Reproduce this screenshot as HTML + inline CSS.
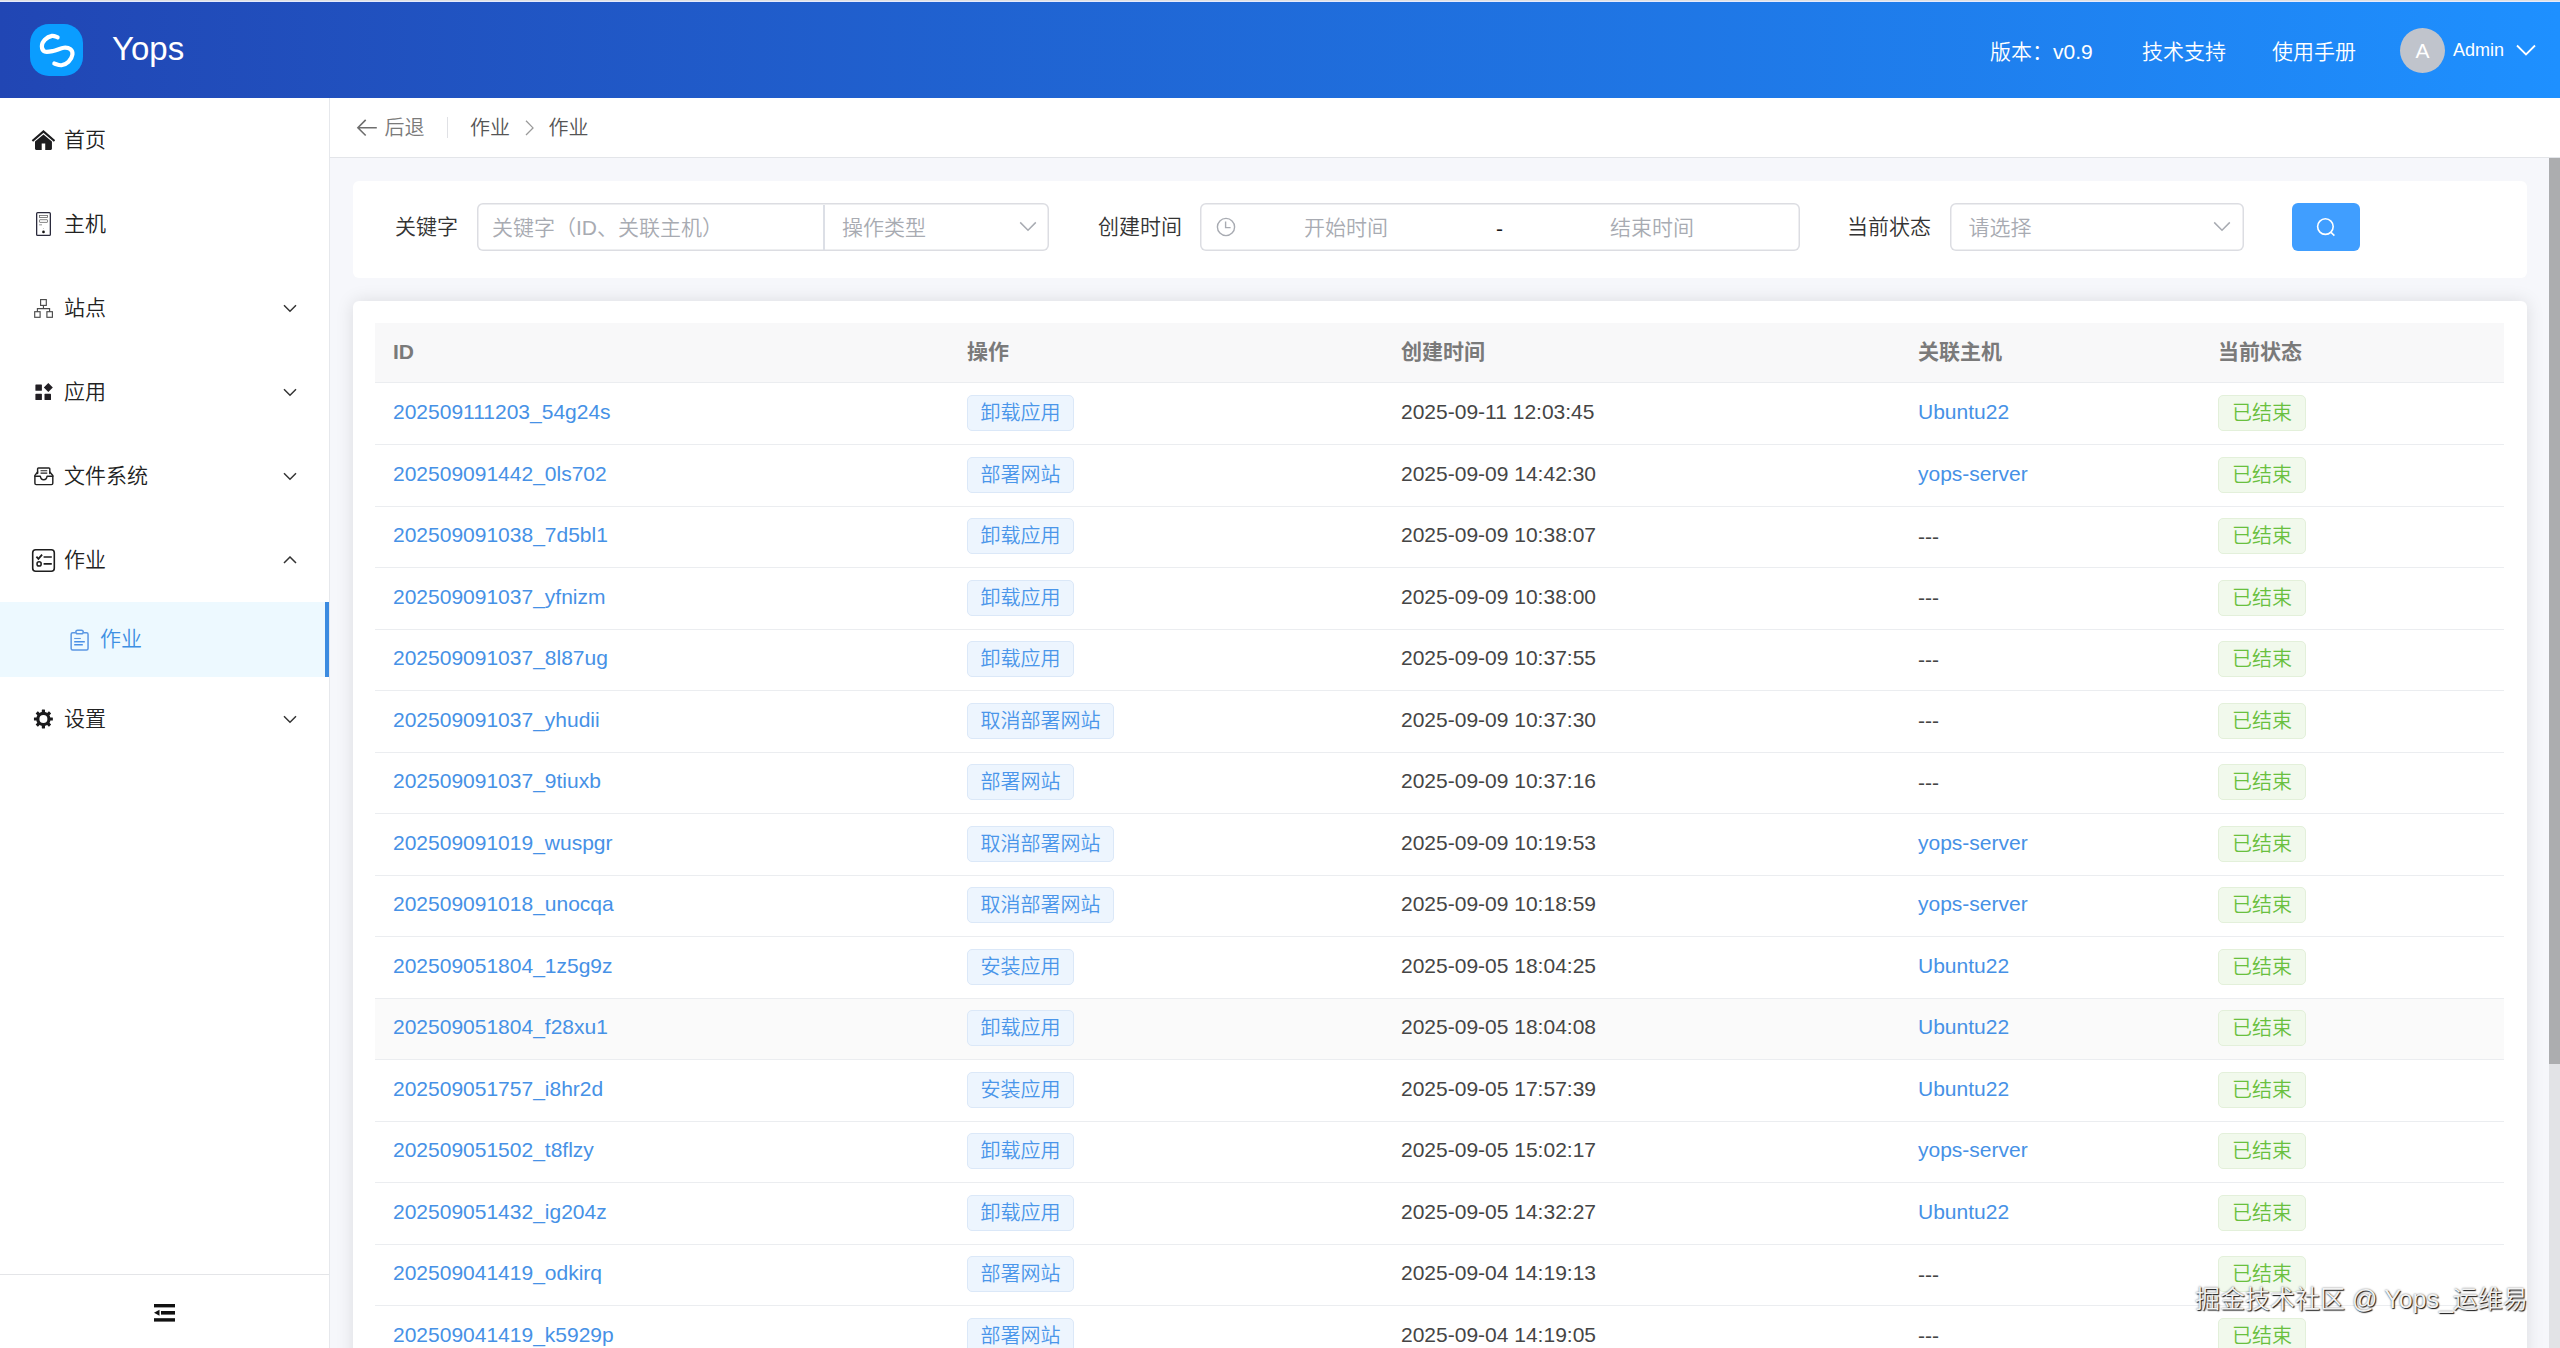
<!DOCTYPE html>
<html lang="zh-CN">
<head>
<meta charset="utf-8">
<title>Yops - 作业</title>
<style>
*{box-sizing:border-box;margin:0;padding:0}
html,body{width:2560px;height:1348px;overflow:hidden}
body{position:relative;background:#f6f7fb;font-family:"Liberation Sans","Noto Sans CJK SC",sans-serif;font-size:21px;font-weight:350;color:#303133}
svg{display:block}
.abs{position:absolute}
/* top strip + header */
#strip{position:absolute;left:0;top:0;width:2560px;height:2px;background:linear-gradient(#e0e0e0 0,#e0e0e0 50%,#e6ebff 50%,#e6ebff 100%)}
#header{position:absolute;left:0;top:2px;width:2560px;height:96px;background:linear-gradient(90deg,#2146b4 0%,#1e90ff 100%);color:#fff}
#logo{position:absolute;left:30px;top:22px;width:53px;height:52px;border-radius:19px;background:#0a9dff}
#brand{position:absolute;left:112px;top:26.5px;font-size:33px;line-height:40px;color:#fff;white-space:nowrap}
.hlink{position:absolute;top:35px;height:30px;line-height:30px;font-size:21px;color:#fff;white-space:nowrap}
#avatar{position:absolute;left:2400px;top:26px;width:45px;height:45px;border-radius:50%;background:#c0c4cc;color:#fff;font-size:21px;line-height:45px;text-align:center}
#admin{position:absolute;left:2453px;top:33px;font-size:18px;line-height:30px;color:#fff}
/* sidebar */
#side{position:absolute;left:0;top:98px;width:330px;height:1250px;background:#fff;border-right:1px solid #e6e8ec}
.mi{position:absolute;left:0;width:329px;height:84px}
.mi .ic{position:absolute}
.mi .tx{position:absolute;left:64px;top:27px;font-size:21px;line-height:30px;color:#222;white-space:nowrap}
.mi .chev{position:absolute;left:283px;top:38px}
#active{position:absolute;left:0;top:504px;width:329px;height:75px;background:#edf9ff}
#active .bar{position:absolute;right:0;top:0;width:4px;height:75px;background:#3b8be0}
#active .tx{position:absolute;left:100px;top:22px;font-size:21px;line-height:30px;color:#3d8fe3}
#sidefoot{position:absolute;left:0;top:1176px;width:329px;height:74px;border-top:1px solid #e4e5e8}
/* breadcrumb */
#crumb{position:absolute;left:330px;top:98px;width:2230px;height:60px;background:#fff;border-bottom:1px solid #e3e5e9}
#crumb span{position:absolute;top:14.5px;font-size:20px;line-height:30px;white-space:nowrap}
/* cards */
.card{position:absolute;background:#fff;border-radius:6px}
#filter{left:353px;top:181px;width:2174px;height:97px}
#tcard{left:353px;top:301px;width:2174px;height:1100px;box-shadow:0 0 18px rgba(0,0,10,.115)}
.lbl{position:absolute;top:31px;font-size:21px;line-height:30px;color:#333;white-space:nowrap}
.inp{position:absolute;top:22px;height:48px;box-shadow:0 0 0 1.5px #dcdde2 inset;border-radius:6px;background:#fff}
.ph{position:absolute;top:10px;font-size:21px;line-height:30px;color:#a8abb2;white-space:nowrap}
#sbtn{position:absolute;left:1939px;top:22px;width:68px;height:48px;border-radius:6px;background:#409eff}
/* table */
#thead{position:absolute;left:22px;top:22px;width:2129px;height:60px;background:#f8f8f9;border-bottom:1px solid #ebedf0}
#thead span{position:absolute;top:14px;font-size:21px;line-height:30px;font-weight:bold;color:#7a7a7a;white-space:nowrap}
.row{position:absolute;left:22px;width:2129px;height:61.5px;border-bottom:1px solid #ebedf0}
.row.hov{background:#fafafa}
.row span{position:absolute;white-space:nowrap}
.c1{left:18px;top:13.5px;font-size:21px;line-height:30px;color:#4691e6}
.c3{left:1026px;top:13.5px;font-size:21px;line-height:30px;color:#454545}
.c4{left:1543px;top:13.5px;font-size:21px;line-height:30px;color:#4691e6}
.c4.no{color:#454545;top:15px}
.tag{top:11.5px;height:36px;padding:0 12.5px;border-radius:5px;font-size:20px;line-height:34px;border:1px solid #dbe8f8;background:#edf5fe;color:#4a96ea}
.c2{left:592px}
.c5{left:1843px}
.tag.ok{border-color:#e3f0da;background:#f1f9ec;color:#69c03e;padding:0 13px}
/* scrollbar */
#sbtrack{position:absolute;left:2549px;top:158px;width:11px;height:1190px;background:#e2e3e6}
#sbthumb{position:absolute;left:2549px;top:158px;width:11px;height:906px;background:#acadaf}
#wm{position:absolute;left:2195px;top:1281px;font-size:25px;line-height:36px;color:#f2f2f2;white-space:nowrap;text-shadow:1px 1px 1px rgba(0,0,0,.9),0 0 2px rgba(0,0,0,.55)}
</style>
</head>
<body>
<div id="strip"></div>
<div id="header">
  <div id="logo"><svg width="53" height="52" viewBox="0 0 53 52"><path d="M27.60 13.35 C26.66 13.10 24.09 11.47 21.96 11.87 C19.83 12.27 16.52 14.00 14.84 15.73 C13.16 17.46 11.87 20.28 11.87 22.26 C11.87 24.24 12.96 26.81 14.84 27.60 C16.72 28.39 19.98 27.64 23.15 27.00 C26.31 26.36 30.96 24.04 33.83 23.74 C36.70 23.44 38.93 24.08 40.36 25.22 C41.79 26.36 42.73 28.48 42.43 30.56 C42.13 32.64 40.41 35.91 38.58 37.69 C36.75 39.47 33.83 40.95 31.45 41.25 C29.07 41.55 25.52 39.77 24.33 39.47" fill="none" stroke="#fff" stroke-width="4.2" stroke-linecap="round"/></svg></div>
  <div id="brand">Yops</div>
  <div class="hlink" style="left:1990px">版本：v0.9</div>
  <div class="hlink" style="left:2142px">技术支持</div>
  <div class="hlink" style="left:2272px">使用手册</div>
  <div id="avatar">A</div>
  <div id="admin">Admin</div>
  <svg class="abs" style="left:2515px;top:41px" width="22" height="14" viewBox="0 0 22 14"><path d="M2 2.5 L11 11.5 L20 2.5" fill="none" stroke="#fff" stroke-width="1.8"/></svg>
</div>

<div id="side">
  <div class="mi" style="top:0">
    <svg class="ic" style="left:31px;top:32px" width="24.2" height="20.5" viewBox="-0.5 0 26 22"><path d="M1.9 11.1 L12.9 1.5 L23.9 11.1" fill="none" stroke="#1d1d1f" stroke-width="2.3" stroke-linecap="square"/><path d="M12.9 4.9 L22 12.4 L22 20.2 Q22 21.4 20.8 21.4 L14.8 21.4 L14.8 14.6 L11 14.6 L11 21.4 L5 21.4 Q3.8 21.4 3.8 20.2 L3.8 12.4 Z" fill="#1d1d1f"/></svg>
    <span class="tx">首页</span>
  </div>
  <div class="mi" style="top:84px">
    <svg class="ic" style="left:35px;top:29px" width="18" height="26" viewBox="0 0 18 26"><rect x="1.65" y="1.65" width="13.7" height="22.8" rx="1" fill="none" stroke="#2a2a3c" stroke-width="1.3"/><rect x="4.5" y="4.5" width="8" height="1.9" fill="none" stroke="#666" stroke-width=".8"/><rect x="4.5" y="8.7" width="8" height="2.7" rx=".5" fill="none" stroke="#666" stroke-width=".8"/><rect x="4.1" y="13.4" width="2.9" height=".9" fill="#888"/><circle cx="8.5" cy="20.9" r="1.35" fill="#111"/><circle cx="8.5" cy="17.5" r=".4" fill="#999"/></svg>
    <span class="tx">主机</span>
  </div>
  <div class="mi" style="top:168px">
    <svg class="ic" style="left:33px;top:32px" width="22" height="21" viewBox="0 0 22 21"><g fill="none" stroke="#4a4a4a" stroke-width="1.15"><rect x="7.6" y="1.6" width="5.7" height="5.8"/><rect x="1.7" y="13.7" width="5.4" height="5.6"/><rect x="13.9" y="13.7" width="5.5" height="5.6"/><path d="M10.45 7.4 V10.6 M4.4 13.7 V10.6 H16.6 V13.7"/></g></svg>
    <span class="tx">站点</span>
    <svg class="chev" width="14" height="9" viewBox="0 0 14 9"><path d="M1 1.3 L7 7.3 L13 1.3" fill="none" stroke="#333" stroke-width="1.5"/></svg>
  </div>
  <div class="mi" style="top:252px">
    <svg class="ic" style="left:34px;top:33px" width="20" height="18" viewBox="0 0 20 18"><g fill="#221f24"><rect x="1.4" y="1.4" width="6.5" height="6.4" rx=".6"/><rect x="1.4" y="10.8" width="6.5" height="6.2" rx=".6"/><rect x="10.5" y="10.8" width="6.5" height="6.2" rx=".6"/><path d="M14.3 0 L18.8 4.5 L14.3 9 L9.8 4.5 Z"/></g></svg>
    <span class="tx">应用</span>
    <svg class="chev" width="14" height="9" viewBox="0 0 14 9"><path d="M1 1.3 L7 7.3 L13 1.3" fill="none" stroke="#333" stroke-width="1.5"/></svg>
  </div>
  <div class="mi" style="top:336px">
    <svg class="ic" style="left:33px;top:32px" width="22" height="20" viewBox="0 0 22 20"><g fill="none" stroke="#222" stroke-width="1.45" stroke-linejoin="round" stroke-linecap="round"><path d="M4.6 7.6 V2.8 Q4.6 1.9 5.5 1.9 H15.9 Q16.8 1.9 16.8 2.8 V7.6"/><path d="M4.6 6 L1.9 9.4 V17.2 Q1.9 18.6 3.3 18.6 H18.4 Q19.8 18.6 19.8 17.2 V9.4 L16.8 6"/><path d="M1.9 10.2 H7.3 Q7.8 13.8 10.7 13.8 Q13.6 13.8 14.1 10.2 H19.8"/><path d="M7.9 4.8 H13.9 M7.9 7.1 H13.9" stroke-width="1.05"/></g></svg>
    <span class="tx">文件系统</span>
    <svg class="chev" width="14" height="9" viewBox="0 0 14 9"><path d="M1 1.3 L7 7.3 L13 1.3" fill="none" stroke="#333" stroke-width="1.5"/></svg>
  </div>
  <div class="mi" style="top:420px">
    <svg class="ic" style="left:31px;top:30px" width="25" height="25" viewBox="0 0 25 25"><g fill="none" stroke="#1e1e1e" stroke-width="1.6"><rect x="1.7" y="1.7" width="21.6" height="21.5" rx="3"/><path d="M5.4 8.7 L7.4 10.8 L11.1 6.6" stroke-width="1.8"/><path d="M12.6 9 H20.8 M12.6 15.9 H20.8" stroke-width="1.7"/><circle cx="8.1" cy="15.9" r="2.1" stroke-width="1.5"/></g></svg>
    <span class="tx">作业</span>
    <svg class="chev" width="14" height="9" viewBox="0 0 14 9"><path d="M1 7 L7 1 L13 7" fill="none" stroke="#333" stroke-width="1.5"/></svg>
  </div>
  <div id="active">
    <svg class="abs" style="left:69px;top:25px" width="22" height="25" viewBox="0 0 22 25"><g fill="none" stroke="#5b97e3" stroke-width="1.5"><path d="M6.6 5.75 H3.65 Q2.15 5.75 2.15 7.25 V21.45 Q2.15 22.95 3.65 22.95 H17.55 Q19.05 22.95 19.05 21.45 V7.25 Q19.05 5.75 17.55 5.75 H14.5"/><rect x="6.85" y="3.25" width="7.4" height="3.6" rx="1.8"/><path d="M5.2 11.5 H11.8" stroke-width="1.1"/><path d="M5.2 14.8 H15.8 M5.2 17.8 H13.8" stroke-width="1.5" stroke="#4a8fe6"/></g></svg>
    <span class="tx">作业</span>
    <div class="bar"></div>
  </div>
  <div class="mi" style="top:579px">
    <svg class="ic" style="left:33px;top:31px" width="21" height="21" viewBox="-10.4 -11 21 21"><g fill="#1b1b1d"><g><rect x="-1.6" y="-9.45" width="3.2" height="4" rx=".4"/><rect x="-1.6" y="5.45" width="3.2" height="4" rx=".4"/><rect x="-9.45" y="-1.6" width="4" height="3.2" rx=".4"/><rect x="5.45" y="-1.6" width="4" height="3.2" rx=".4"/></g><g transform="rotate(45)"><rect x="-1.6" y="-9.45" width="3.2" height="4" rx=".4"/><rect x="-1.6" y="5.45" width="3.2" height="4" rx=".4"/><rect x="-9.45" y="-1.6" width="4" height="3.2" rx=".4"/><rect x="5.45" y="-1.6" width="4" height="3.2" rx=".4"/></g></g><circle cx="0" cy="0" r="5.6" fill="none" stroke="#1b1b1d" stroke-width="3.2"/></svg>
    <span class="tx">设置</span>
    <svg class="chev" width="14" height="9" viewBox="0 0 14 9"><path d="M1 1.3 L7 7.3 L13 1.3" fill="none" stroke="#333" stroke-width="1.5"/></svg>
  </div>
  <div id="sidefoot">
    <svg class="abs" style="left:154px;top:29px" width="21" height="18" viewBox="0 0 21 18"><rect x="0" y="0" width="21" height="3.4" fill="#111"/><rect x="7" y="7" width="14" height="3.6" fill="#111"/><rect x="0" y="14.2" width="21" height="3.4" fill="#111"/><path d="M0 8.8 L5.5 5.8 L5.5 11.8 Z" fill="#111"/></svg>
  </div>
</div>

<div id="crumb">
  <svg class="abs" style="left:26px;top:20px" width="22" height="20" viewBox="0 0 22 20"><path d="M20.8 9.7 H2 M9.7 1.9 L1.9 9.7 L9.7 17.5" fill="none" stroke="#6e6e6e" stroke-width="1.6"/></svg>
  <span style="left:54.5px;color:#7a7a7a">后退</span>
  <div class="abs" style="left:117px;top:19px;width:1px;height:21px;background:#e0e1e5"></div>
  <span style="left:140px;color:#555">作业</span>
  <svg class="abs" style="left:194px;top:21px" width="11" height="18" viewBox="0 0 11 18"><path d="M2 1.8 L9 8.9 L2 16" fill="none" stroke="#9a9a9a" stroke-width="1.3"/></svg>
  <span style="left:218.5px;color:#555">作业</span>
</div>

<div id="filter" class="card">
  <span class="lbl" style="left:42px">关键字</span>
  <div class="inp" style="left:124px;width:572px">
    <span class="ph" style="left:15px">关键字（ID、关联主机）</span>
    <div class="abs" style="left:346px;top:1.5px;width:1.5px;height:45px;background:#dcdfe6"></div>
    <span class="ph" style="left:365px">操作类型</span>
    <svg class="abs" style="left:542px;top:18px" width="18" height="11" viewBox="0 0 18 11"><path d="M1.2 1.4 L9 9.2 L16.8 1.4" fill="none" stroke="#a8abb2" stroke-width="1.5"/></svg>
  </div>
  <span class="lbl" style="left:745px">创建时间</span>
  <div class="inp" style="left:847px;width:600px">
    <svg class="abs" style="left:15px;top:13px" width="22" height="22" viewBox="0 0 22 22"><circle cx="11" cy="11" r="8.6" fill="none" stroke="#a8abb2" stroke-width="1.4"/><path d="M10.6 5.6 V11.6 H15.6" fill="none" stroke="#a8abb2" stroke-width="1.4"/></svg>
    <span class="ph" style="left:104px">开始时间</span>
    <span class="ph" style="left:296px;top:10.5px;color:#1a1a1a">-</span>
    <span class="ph" style="left:410px">结束时间</span>
  </div>
  <span class="lbl" style="left:1494px">当前状态</span>
  <div class="inp" style="left:1597px;width:294px">
    <span class="ph" style="left:18.5px">请选择</span>
    <svg class="abs" style="left:263px;top:18px" width="18" height="11" viewBox="0 0 18 11"><path d="M1.2 1.4 L9 9.2 L16.8 1.4" fill="none" stroke="#a8abb2" stroke-width="1.5"/></svg>
  </div>
  <div id="sbtn"><svg class="abs" style="left:22px;top:12px" width="24" height="24" viewBox="0 0 24 24"><circle cx="11.4" cy="11.6" r="7.8" fill="none" stroke="#fff" stroke-width="1.6"/><path d="M17 17.4 L20.4 20.6" stroke="#fff" stroke-width="1.6" fill="none"/></svg></div>
</div>

<div id="tcard" class="card">
  <div id="thead">
    <span style="left:18px">ID</span><span style="left:592px">操作</span><span style="left:1026px">创建时间</span><span style="left:1543px">关联主机</span><span style="left:1843px">当前状态</span>
  </div>
  <!-- ROWS -->
  <div class="row" style="top:82.5px"><span class="c1">202509111203_54g24s</span><span class="tag c2">卸载应用</span><span class="c3">2025-09-11 12:03:45</span><span class="c4">Ubuntu22</span><span class="tag ok c5">已结束</span></div>
  <div class="row" style="top:144.0px"><span class="c1">202509091442_0ls702</span><span class="tag c2">部署网站</span><span class="c3">2025-09-09 14:42:30</span><span class="c4">yops-server</span><span class="tag ok c5">已结束</span></div>
  <div class="row" style="top:205.5px"><span class="c1">202509091038_7d5bl1</span><span class="tag c2">卸载应用</span><span class="c3">2025-09-09 10:38:07</span><span class="c4 no">---</span><span class="tag ok c5">已结束</span></div>
  <div class="row" style="top:267.0px"><span class="c1">202509091037_yfnizm</span><span class="tag c2">卸载应用</span><span class="c3">2025-09-09 10:38:00</span><span class="c4 no">---</span><span class="tag ok c5">已结束</span></div>
  <div class="row" style="top:328.5px"><span class="c1">202509091037_8l87ug</span><span class="tag c2">卸载应用</span><span class="c3">2025-09-09 10:37:55</span><span class="c4 no">---</span><span class="tag ok c5">已结束</span></div>
  <div class="row" style="top:390.0px"><span class="c1">202509091037_yhudii</span><span class="tag c2">取消部署网站</span><span class="c3">2025-09-09 10:37:30</span><span class="c4 no">---</span><span class="tag ok c5">已结束</span></div>
  <div class="row" style="top:451.5px"><span class="c1">202509091037_9tiuxb</span><span class="tag c2">部署网站</span><span class="c3">2025-09-09 10:37:16</span><span class="c4 no">---</span><span class="tag ok c5">已结束</span></div>
  <div class="row" style="top:513.0px"><span class="c1">202509091019_wuspgr</span><span class="tag c2">取消部署网站</span><span class="c3">2025-09-09 10:19:53</span><span class="c4">yops-server</span><span class="tag ok c5">已结束</span></div>
  <div class="row" style="top:574.5px"><span class="c1">202509091018_unocqa</span><span class="tag c2">取消部署网站</span><span class="c3">2025-09-09 10:18:59</span><span class="c4">yops-server</span><span class="tag ok c5">已结束</span></div>
  <div class="row" style="top:636.0px"><span class="c1">202509051804_1z5g9z</span><span class="tag c2">安装应用</span><span class="c3">2025-09-05 18:04:25</span><span class="c4">Ubuntu22</span><span class="tag ok c5">已结束</span></div>
  <div class="row hov" style="top:697.5px"><span class="c1">202509051804_f28xu1</span><span class="tag c2">卸载应用</span><span class="c3">2025-09-05 18:04:08</span><span class="c4">Ubuntu22</span><span class="tag ok c5">已结束</span></div>
  <div class="row" style="top:759.0px"><span class="c1">202509051757_i8hr2d</span><span class="tag c2">安装应用</span><span class="c3">2025-09-05 17:57:39</span><span class="c4">Ubuntu22</span><span class="tag ok c5">已结束</span></div>
  <div class="row" style="top:820.5px"><span class="c1">202509051502_t8flzy</span><span class="tag c2">卸载应用</span><span class="c3">2025-09-05 15:02:17</span><span class="c4">yops-server</span><span class="tag ok c5">已结束</span></div>
  <div class="row" style="top:882.0px"><span class="c1">202509051432_ig204z</span><span class="tag c2">卸载应用</span><span class="c3">2025-09-05 14:32:27</span><span class="c4">Ubuntu22</span><span class="tag ok c5">已结束</span></div>
  <div class="row" style="top:943.5px"><span class="c1">202509041419_odkirq</span><span class="tag c2">部署网站</span><span class="c3">2025-09-04 14:19:13</span><span class="c4 no">---</span><span class="tag ok c5">已结束</span></div>
  <div class="row" style="top:1005.0px"><span class="c1">202509041419_k5929p</span><span class="tag c2">部署网站</span><span class="c3">2025-09-04 14:19:05</span><span class="c4 no">---</span><span class="tag ok c5">已结束</span></div>
  <!-- /ROWS -->

</div>

<div id="sbtrack"></div>
<div id="sbthumb"></div>
<div id="wm">掘金技术社区 @ Yops_运维易</div>
</body>
</html>
